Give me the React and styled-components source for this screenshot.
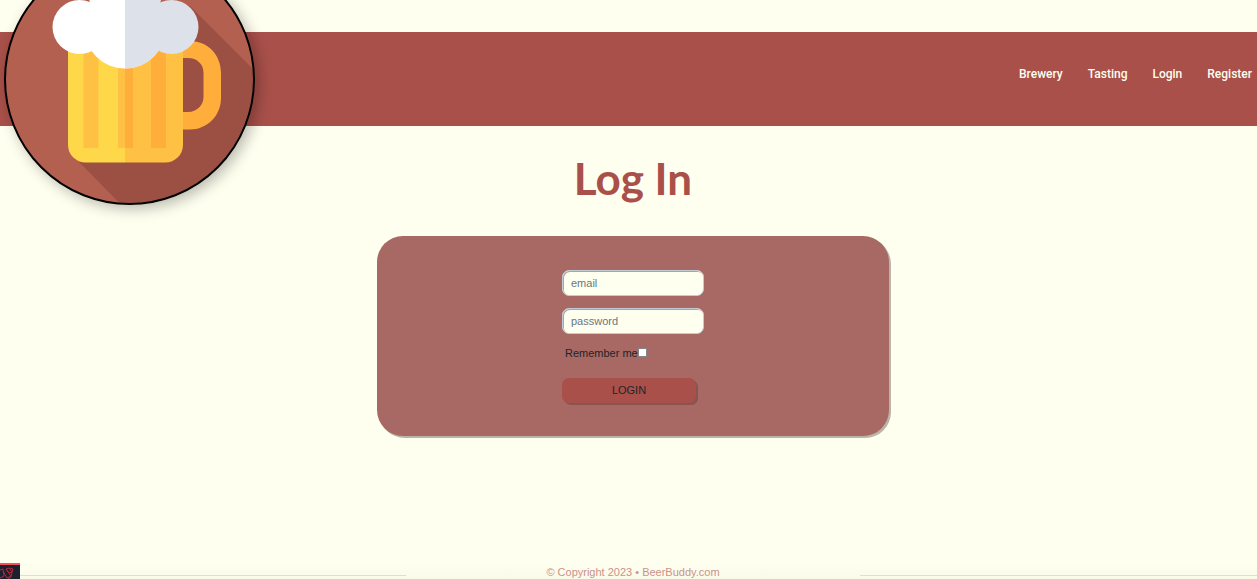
import React from "react";
import styled, { createGlobalStyle } from "styled-components";

const color = {
  page: "#fffff0",
  brick: "#a9504a",
  card: "#a86863",
  ink: "#212529",
};

const GlobalStyle = createGlobalStyle`
  *, *::before, *::after { box-sizing: border-box; }
  body {
    margin: 0;
    background: ${color.page};
    color: ${color.ink};
    font-family: "Liberation Sans", Arial, sans-serif;
    font-size: 11px;
    line-height: 14px;
  }
`;

const Page = styled.div`
  display: flex;
  flex-direction: column;
  min-height: 100vh;
  padding-top: 32px;
`;

const Header = styled.header`
  position: relative;
  display: flex;
  align-items: center;
  justify-content: flex-end;
  height: 94px;
  padding: 0 5px 10px;
  background: ${color.brick};
`;

const LogoLink = styled.a`
  position: absolute;
  left: 4px;
  bottom: -79px;
  width: 251px;
  height: 251px;
  border-radius: 50%;
  box-shadow: 4px 4px 14px rgba(0, 0, 0, 0.28);

  svg { display: block; }
`;

const Nav = styled.nav`
  display: flex;
  gap: 25px;
`;

const NavLink = styled.a`
  color: ${color.page};
  font-family: Roboto, sans-serif;
  font-size: 12px;
  font-weight: 500;
  text-decoration: none;
`;

const Main = styled.main`
  flex: 1;
  display: flex;
  flex-direction: column;
  align-items: center;
  padding: 24px 0 24px 9px;
`;

const Title = styled.h1`
  margin: 0 0 30px;
  color: ${color.brick};
  font-family: Lato, sans-serif;
  font-size: 44px;
  font-weight: 700;
  line-height: 56px;
`;

const Card = styled.section`
  display: flex;
  justify-content: center;
  width: 512px;
  max-width: 100%;
  padding: 34px 24px 32px;
  border-radius: 26px;
  background: ${color.card};
  box-shadow: 2px 2px 0 #bab5a9;
`;

const Form = styled.form`
  display: flex;
  flex-direction: column;
  align-items: flex-start;
  width: 142px;
`;

const TextInput = styled.input`
  width: 100%;
  height: 26px;
  margin-bottom: 12px;
  padding: 0 8px 1px;
  border: 1px solid #c3ccd4;
  border-radius: 7px;
  background: ${color.page};
  box-shadow: inset 1px 1px 0 #aaa5a2;
  color: ${color.ink};
  font: inherit;

  &::placeholder { color: #6c757d; opacity: 1; }
`;

const Remember = styled.label`
  display: flex;
  align-items: flex-start;
  padding-left: 3px;
`;

const Checkbox = styled.input`
  appearance: none;
  width: 9px;
  height: 9px;
  margin: 2px 0 0;
  border: 1px solid #858585;
  background: #fff;

  &:checked { background: ${color.brick}; }
`;

const Submit = styled.button`
  width: 134px;
  height: 25px;
  margin: 18px 0 1px;
  padding: 0 0 1px;
  border: 0;
  border-radius: 7px;
  background: ${color.brick};
  box-shadow: 2px 2px 0 #875550;
  color: ${color.ink};
  font: inherit;
`;

const Footer = styled.footer`
  display: flex;
  align-items: flex-end;
  height: 16px;
  background: linear-gradient(${color.page}, #fafae9);
`;

const Rule = styled.hr`
  flex: ${(p) => p.$grow};
  height: 1px;
  margin: 0 0 3px;
  border: 0;
  background: #deded2;
`;

const Copyright = styled.p`
  width: 454px;
  margin: 0;
  color: #cb928a;
  text-align: center;
`;

const DebugToggle = styled.button`
  position: fixed;
  left: 0;
  bottom: 0;
  width: 20px;
  height: 16px;
  padding: 0;
  overflow: hidden;
  border: 0;
  border-top: 2px solid #f4515b;
  background: #1b2130;

  svg { display: block; }
`;

function BeerLogo() {
  return (
    <svg width="251" height="251" viewBox="4 -46 251 251" aria-hidden="true">
      <defs>
        <clipPath id="disc"><circle cx="129.5" cy="79.5" r="124" /></clipPath>
        <clipPath id="foam-right"><rect x="125" y="-46" width="130" height="251" /></clipPath>
        <clipPath id="glass">
          <path d="M68 20H183V145A17.5 17.5 0 0 1 165.500 162.500H85.500A17.500 17.500 0 0 1 68 145Z" />
        </clipPath>
      </defs>
      <circle cx="129.5" cy="79.5" r="124.500" fill="#b46050" />
      <g clipPath="url(#disc)">
        <path d="M190 6L270 86V240H156L78 161L110 90Z" fill="#9c5043" />
        <path d="M183 41H190C208 41 221 55 221 73V98C221 116 207 129.500 190 129.500H183V112H188C197 112 203.500 105 203.500 97V73C203.500 64 197 58 188 58H183Z" fill="#ffae3b" />
        <g clipPath="url(#glass)">
          <path d="M68 20H125V164H68Z" fill="#ffd849" />
          <path d="M125 20H183V164H125Z" fill="#ffc143" />
          <path d="M83.500 20H98.500V148H83.500ZM118 20H125V148H118Z" fill="#ffc143" />
          <path d="M125 20H133V148H125ZM151 20H166V148H151Z" fill="#ffae3b" />
        </g>
        <g fill="#fff">
          <circle cx="79.500" cy="27" r="27" />
          <circle cx="125" cy="28" r="40.500" />
          <circle cx="125" cy="-5" r="36" />
        </g>
        <g fill="#dde1ea" clipPath="url(#foam-right)">
          <circle cx="171.500" cy="27" r="27" />
          <circle cx="125" cy="28" r="40.500" />
          <circle cx="125" cy="-5" r="36" />
        </g>
      </g>
      <circle cx="129.5" cy="79.5" r="124.500" fill="none" stroke="#000" strokeWidth="2" />
    </svg>
  );
}

function DebugIcon() {
  return (
    <svg width="20" height="14" viewBox="0 0 20 14" fill="none" stroke="#b82832" aria-hidden="true">
      <path d="M0 5L3 4L4 11L0 13M3 6L7 13L11 11L6 4M6 4L9 3L12 7L9 8ZM10 3L13 4L12 7L11 12L8 14" />
    </svg>
  );
}

const links = ["Brewery", "Tasting", "Login", "Register"];

export default function App() {
  return (
    <>
      <GlobalStyle />
      <Page>
        <Header>
          <LogoLink href="#home" aria-label="BeerBuddy"><BeerLogo /></LogoLink>
          <Nav>
            {links.map((name) => (
              <NavLink key={name} href={`#${name.toLowerCase()}`}>{name}</NavLink>
            ))}
          </Nav>
        </Header>
        <Main>
          <Title>Log In</Title>
          <Card>
            <Form onSubmit={(e) => e.preventDefault()}>
              <TextInput type="email" placeholder="email" aria-label="email" />
              <TextInput type="password" placeholder="password" aria-label="password" />
              <Remember htmlFor="remember">
                Remember me
                <Checkbox id="remember" type="checkbox" />
              </Remember>
              <Submit type="submit">LOGIN</Submit>
            </Form>
          </Card>
        </Main>
        <Footer>
          <Rule $grow={406} />
          <Copyright>© Copyright 2023 • BeerBuddy.com</Copyright>
          <Rule $grow={397} />
        </Footer>
      </Page>
      <DebugToggle type="button" aria-label="Debug bar"><DebugIcon /></DebugToggle>
    </>
  );
}
